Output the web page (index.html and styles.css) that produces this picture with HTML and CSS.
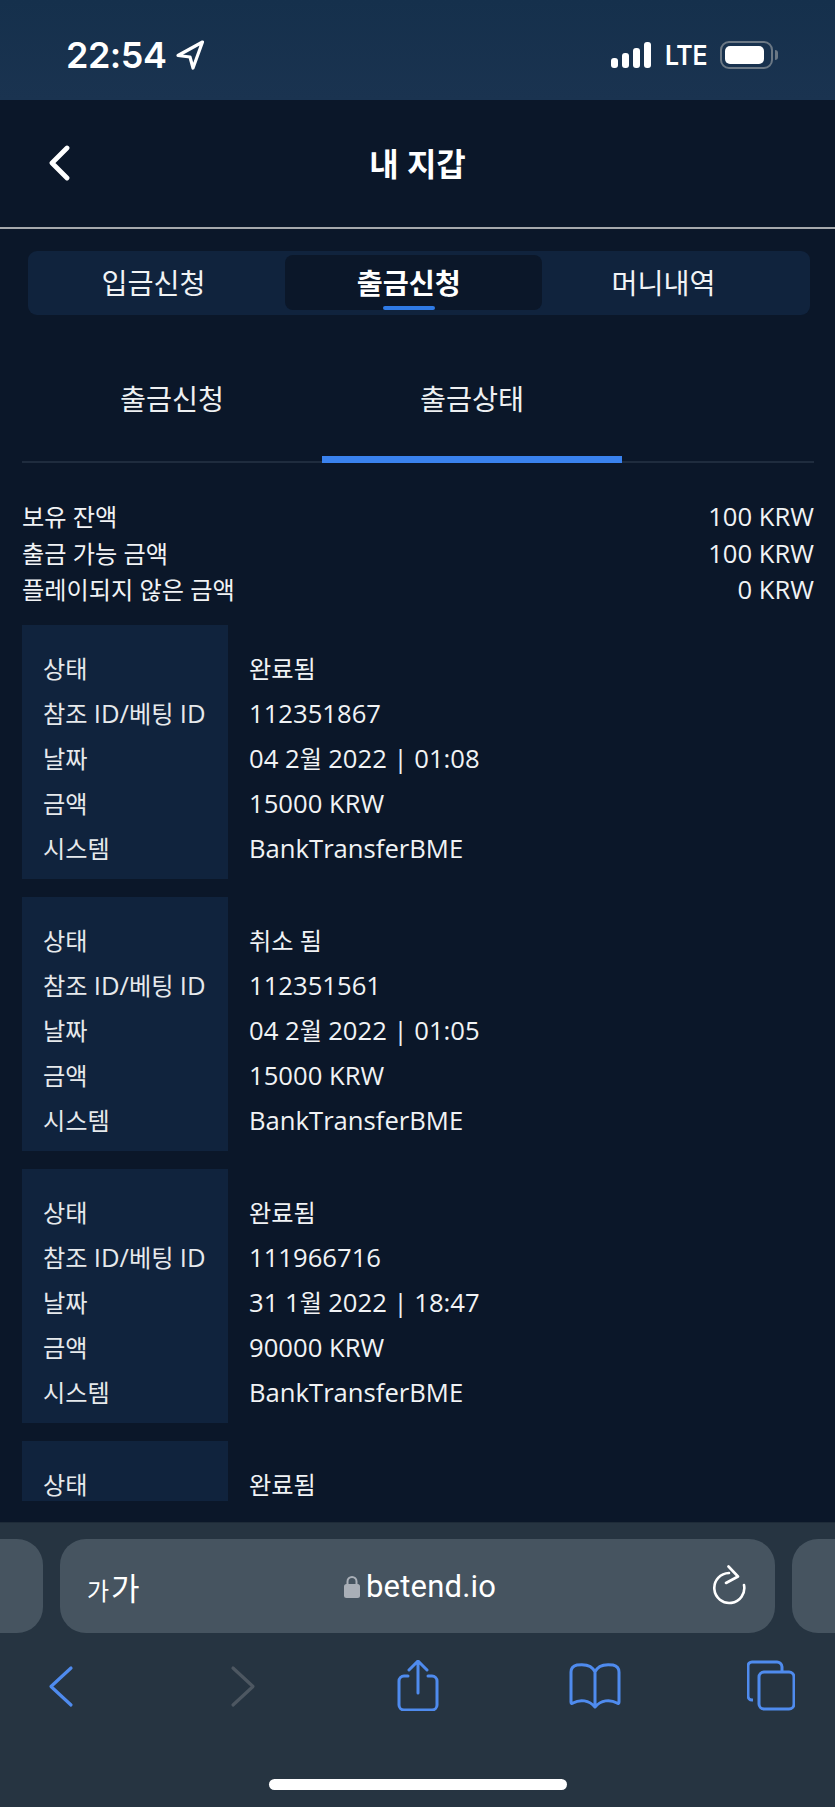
FILE: index.html
```html
<!DOCTYPE html>
<html lang="ko">
<head>
<meta charset="utf-8">
<title>내 지갑</title>
<link rel="stylesheet" href="styles.css">
</head>
<body>
<div class="phone">
  <header class="status">
    <div class="status-left">
      <span class="time">22:54</span>
      <svg class="loc" width="30" height="30" viewBox="0 0 30 30"><path d="M27.500 2 3 15.500l12 1.500 3 11Z" fill="none" stroke="#fff" stroke-width="3.2" stroke-linejoin="round"/></svg>
    </div>
    <div class="status-right">
      <div class="signal"><i class="b1"></i><i class="b2"></i><i class="b3"></i><i class="b4"></i></div>
      <span class="lte">LTE</span>
      <div class="battery"><div class="battery-fill"></div></div>
      <div class="battery-nub"></div>
    </div>
  </header>

  <nav class="topbar">
    <svg class="back" width="24" height="36" viewBox="0 0 24 36"><path d="M20 3 5 18l15 15" fill="none" stroke="#fff" stroke-width="4.8" stroke-linecap="round" stroke-linejoin="round"/></svg>
    <h1 class="title">내 지갑</h1>
  </nav>

  <div class="scroll">
    <div class="segment">
      <div class="seg seg-1">입금신청</div>
      <div class="seg seg-active">출금신청</div>
      <div class="seg seg-3">머니내역</div>
    </div>

    <div class="tabs">
      <div class="tab">출금신청</div>
      <div class="tab tab-active">출금상태</div>
    </div>

    <div class="summary">
      <div class="sum-row"><span>보유 잔액</span><span class="n">100 KRW</span></div>
      <div class="sum-row"><span>출금 가능 금액</span><span class="n">100 KRW</span></div>
      <div class="sum-row"><span>플레이되지 않은 금액</span><span class="n">0 KRW</span></div>
    </div>

    <div class="card">
      <div class="labels"><div>상태</div><div>참조 <span class="n">ID/</span>베팅 <span class="n">ID</span></div><div>날짜</div><div>금액</div><div>시스템</div></div>
      <div class="values"><div>완료됨</div><div class="n">112351867</div><div><span class="n">04 2</span>월 <span class="n">2022 | 01:08</span></div><div class="n">15000 KRW</div><div class="n">BankTransferBME</div></div>
    </div>
    <div class="card">
      <div class="labels"><div>상태</div><div>참조 <span class="n">ID/</span>베팅 <span class="n">ID</span></div><div>날짜</div><div>금액</div><div>시스템</div></div>
      <div class="values"><div>취소 됨</div><div class="n">112351561</div><div><span class="n">04 2</span>월 <span class="n">2022 | 01:05</span></div><div class="n">15000 KRW</div><div class="n">BankTransferBME</div></div>
    </div>
    <div class="card">
      <div class="labels"><div>상태</div><div>참조 <span class="n">ID/</span>베팅 <span class="n">ID</span></div><div>날짜</div><div>금액</div><div>시스템</div></div>
      <div class="values"><div>완료됨</div><div class="n">111966716</div><div><span class="n">31 1</span>월 <span class="n">2022 | 18:47</span></div><div class="n">90000 KRW</div><div class="n">BankTransferBME</div></div>
    </div>
    <div class="card">
      <div class="labels"><div>상태</div></div>
      <div class="values"><div>완료됨</div></div>
    </div>
  </div>

  <footer class="browser">
    <div class="url-row">
      <div class="pill pill-left"></div>
      <div class="url">
        <span class="aa"><small>가</small>가</span>
        <div class="addr">
          <svg width="16" height="23" viewBox="0 0 16 23"><path d="M3.500 10V6.500a4.500 4.500 0 0 1 9 0V10" fill="none" stroke="#a9afb7" stroke-width="2"/><rect x="0" y="9" width="16" height="14" rx="2.500" fill="#a9afb7"/></svg>
          <span class="domain">betend.io</span>
        </div>
        <svg class="reload" width="34" height="40" viewBox="0 0 34 40"><path d="M16 8A15 15 0 1 0 31 20" fill="none" stroke="#fff" stroke-width="2.600" stroke-linecap="round"/><path d="M15.500 1.500 25 11.500 13 18" fill="none" stroke="#fff" stroke-width="2.600" stroke-linecap="round" stroke-linejoin="round"/></svg>
      </div>
      <div class="pill pill-right"></div>
    </div>
    <div class="tools">
      <svg width="48" height="51" viewBox="0 0 48 51"><path d="M34 8 14 26.500 34 45" fill="none" stroke="#4f8bee" stroke-width="3.200" stroke-linecap="round" stroke-linejoin="round"/></svg>
      <svg width="48" height="51" viewBox="0 0 48 51"><path d="M14 8 34 26.500 14 45" fill="none" stroke="#4d5761" stroke-width="3.200" stroke-linecap="round" stroke-linejoin="round"/></svg>
      <svg width="48" height="51" viewBox="0 0 48 51"><path d="M14 16h-4a5 5 0 0 0-5 5v24a5 5 0 0 0 5 5h28a5 5 0 0 0 5-5V21a5 5 0 0 0-5-5h-4M24 33V2M15 10l9-9 9 9" fill="none" stroke="#4f8bee" stroke-width="3" stroke-linecap="round" stroke-linejoin="round"/></svg>
      <svg class="book" width="52" height="51" viewBox="0 0 52 51"><path d="M26 12C23 5 15 4 8 5c-4 1-6 4-6 7v30c0 1 .5 2 2 1 7-4 16-3 22 4 6-7 15-8 22-4 1.500 1 2 0 2-1V12c0-3-2-6-6-7-7-1-15 0-18 7ZM26 12v34" fill="none" stroke="#4f8bee" stroke-width="3" stroke-linejoin="round"/></svg>
      <svg width="48" height="51" viewBox="0 0 48 51"><path d="M6 40H5a4 4 0 0 1-4-4V6a4 4 0 0 1 4-4h24a5 5 0 0 1 6 5v4" fill="none" stroke="#4f8bee" stroke-width="3"/><rect x="12" y="12" width="35" height="37" rx="5" fill="none" stroke="#4f8bee" stroke-width="3"/></svg>
    </div>
    <div class="home"></div>
  </footer>
</div>
</body>
</html>
```
FILE: styles.css
```css
* { box-sizing: border-box; }
html, body { margin: 0; padding: 0; }
body {
  width: 835px;
  height: 1807px;
  overflow: hidden;
  background: #0b1729;
  color: #f1f3f5;
  font-family: "Open Sans", "Noto Sans CJK KR", sans-serif;
}
.phone { display: flex; flex-direction: column; width: 835px; height: 1807px; }
.n { font-size: 1.06em; }

/* status bar */
.status {
  height: 100px;
  flex: none;
  display: flex;
  justify-content: space-between;
  align-items: center;
  padding: 10px 57px 0 66px;
  background: linear-gradient(#15304c, #1a3350);
  color: #fff;
}
.status-left { display: flex; align-items: center; gap: 9px; }
.time { font: 600 36px/1 Inter, sans-serif; letter-spacing: -.5px; }
.loc { display: block; }
.status-right { display: flex; align-items: center; }
.signal { display: flex; align-items: flex-end; gap: 4px; height: 26px; margin-right: 14px; }
.signal i { display: block; width: 7px; background: #fff; border-radius: 3px; }
.b1 { height: 10px; } .b2 { height: 15px; } .b3 { height: 20px; } .b4 { height: 26px; }
.lte { width: 42px; margin-right: 13px; font: 600 27px/1 Inter, sans-serif; letter-spacing: -.4px; white-space: nowrap; transform: scaleX(.92); transform-origin: left; }
.battery { width: 53px; height: 28px; border: 2px solid #6b7885; border-radius: 9px; padding: 3px; }
.battery-fill { width: 90%; height: 100%; background: #fff; border-radius: 5px; }
.battery-nub { width: 3px; height: 10px; margin-left: 2px; background: #6b7885; border-radius: 0 3px 3px 0; }

/* top bar */
.topbar {
  position: relative;
  flex: none;
  height: 129px;
  display: flex;
  align-items: center;
  justify-content: center;
  border-bottom: 2px solid #a6a9ad;
  background: #0b1729;
}
.back { position: absolute; left: 47px; top: 45px; }
.title { margin: 0; font-size: 32px; font-weight: 700; color: #fff; line-height: 1; }

/* scrolling content */
.scroll { flex: none; height: 1272px; margin-bottom: 21px; overflow: hidden; padding: 22px 21px 0 22px; }
.segment {
  display: grid;
  grid-template-columns: 250px 256.500px 1fr;
  height: 64px;
  margin: 0 4.500px 0 6px;
  padding: 4px 7px 5px;
  background: #10233d;
  border-radius: 9px;
}
.seg {
  display: flex;
  align-items: center;
  justify-content: center;
  padding-bottom: 3px;
  font-size: 28.300px;
  color: #f1f3f5;
}
.seg-1 { padding-right: 13px; }
.seg-3 { padding-right: 17px; }
.seg-active { position: relative; padding-right: 9px; background: #0b1729; border-radius: 8px; font-weight: 700; color: #fff; }
.seg-active::after {
  content: "";
  position: absolute;
  left: 98px;
  bottom: 0;
  width: 52px;
  height: 4px;
  background: #2f7ae5;
  border-radius: 2px;
}
.tabs { display: flex; height: 148px; border-bottom: 2px solid #1f2c3e; }
.tab {
  width: 300px;
  display: flex;
  align-items: center;
  justify-content: center;
  padding-top: 23px;
  margin-bottom: -2px;
  font-size: 28.300px;
  color: #eef0f2;
  border-bottom: 7px solid transparent;
}
.tab-active { border-bottom-color: #3a82ee; }
.summary { padding-top: 36px; margin-bottom: 16px; }
.sum-row { display: flex; justify-content: space-between; height: 36.500px; font-size: 24.200px; line-height: 36px; color: #f1f3f5; }
.card { display: flex; height: 254px; margin-bottom: 18px; font-size: 24.200px; line-height: 45px; }
.labels { flex: none; width: 206px; padding: 21px 0 0 21px; background: #10233d; color: #e6e9ec; white-space: nowrap; }
.values { padding: 21px 0 0 21px; color: #f1f3f5; white-space: nowrap; }

/* browser chrome */
.browser { flex: 1; background: #263441; border-top: 1px solid #1e2b38; padding-top: 16px; }
.url-row { display: flex; gap: 17px; height: 94px; }
.pill { flex: 1; background: #465460; }
.pill-left { border-radius: 0 26px 26px 0; }
.pill-right { border-radius: 26px 0 0 26px; }
.url {
  position: relative;
  flex: none;
  width: 715px;
  display: flex;
  align-items: center;
  justify-content: space-between;
  padding: 0 28px 0 27px;
  background: #465460;
  border-radius: 26px;
  color: #fff;
}
.aa { font-size: 31px; line-height: 1; letter-spacing: 2px; font-family: "Noto Sans CJK KR", sans-serif; }
.aa small { font-size: 24px; }
.addr { position: absolute; left: 284px; top: 0; bottom: 0; display: flex; align-items: center; gap: 6px; }
.domain { font: 400 31px/1 Roboto, sans-serif; letter-spacing: .2px; }
.reload { display: block; margin-bottom: 2px; }
.tools { display: grid; grid-template-columns: 182px 175px 176px 177px 48px; align-items: center; height: 51px; margin-top: 27px; padding-left: 37px; }
.tools svg { display: block; }
.tools .book { margin-left: -1px; }
.home { width: 298px; height: 11px; margin: 68px auto 0; background: #fff; border-radius: 6px; }
```
